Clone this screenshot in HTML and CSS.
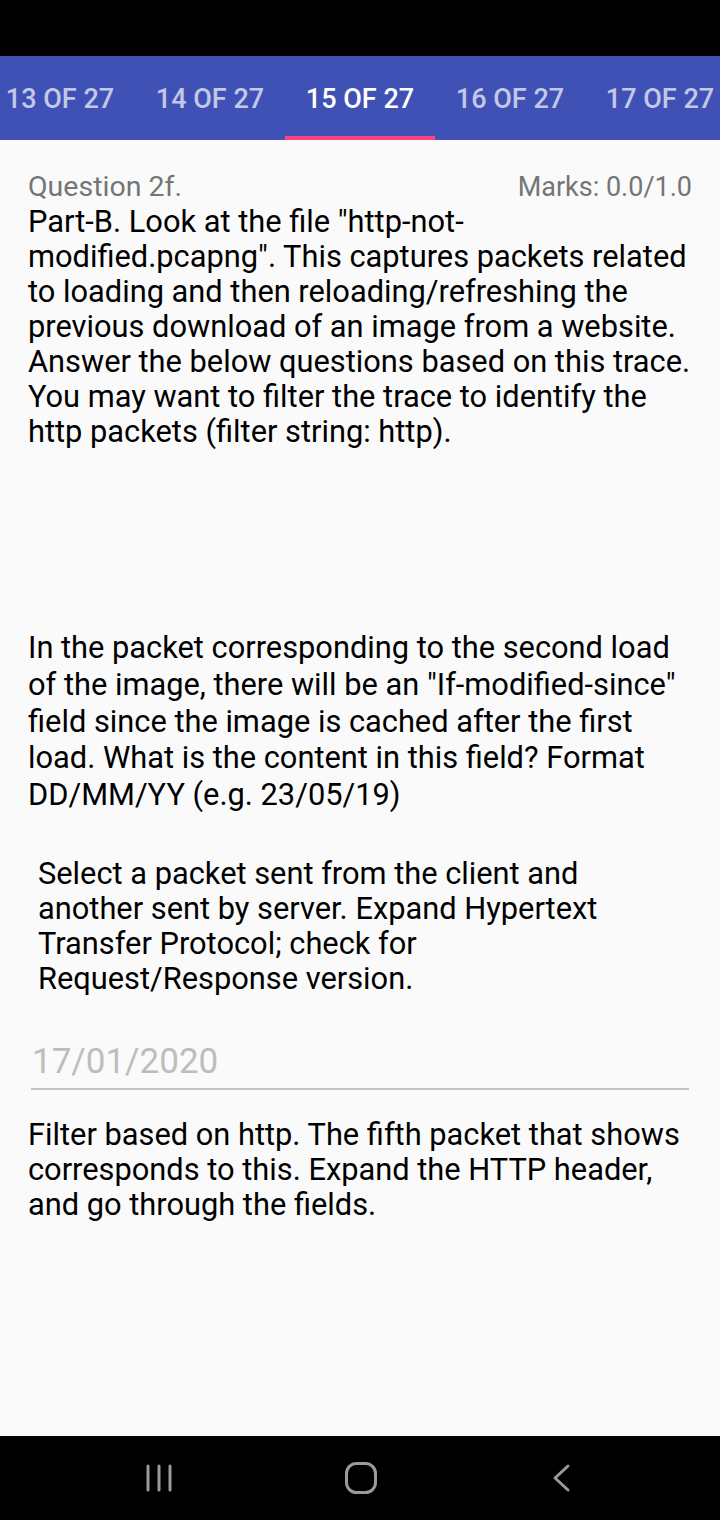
FILE: index.html
```html
<!DOCTYPE html>
<html>
<head>
<meta charset="utf-8">
<link rel="stylesheet" href="styles.css">
</head>
<body>
<div class="screen">
  <div class="status-bar"></div>
  <div class="tab-bar">
    <div class="tabs">
      <div class="tab">13 OF 27</div>
      <div class="tab">14 OF 27</div>
      <div class="tab active">15 OF 27</div>
      <div class="tab">16 OF 27</div>
      <div class="tab">17 OF 27</div>
    </div>
  </div>
  <main class="content">
    <div class="q-head">
      <span class="q-num">Question 2f.</span>
      <span class="q-marks">Marks: 0.0/1.0</span>
    </div>
    <p class="q-text">Part-B. Look at the file "http-not-modified.pcapng". This captures packets related to loading and then reloading/refreshing the previous download of an image from a website. Answer the below questions based on this trace. You may want to filter the trace to identify the http packets (filter string: http).</p>
    <p class="q-sub">In the packet corresponding to the second load of the image, there will be an "If-modified-since" field since the image is cached after the first load. What is the content in this field? Format DD/MM/YY (e.g. 23/05/19)</p>
    <p class="q-hint">Select a packet sent from the client and another sent by server. Expand Hypertext Transfer Protocol; check for Request/Response version.</p>
    <div class="answer">
      <div class="answer-text">17/01/2020</div>
    </div>
    <p class="feedback">Filter based on http. The fifth packet that shows corresponds to this. Expand the HTTP header, and go through the fields.</p>
  </main>
  <nav class="nav-bar">
    <div class="nav-cell">
      <svg width="30" height="30" viewBox="0 0 30 30"><g stroke="#9a9a9a" stroke-width="3" stroke-linecap="round"><line x1="3" y1="3" x2="3" y2="27"/><line x1="14" y1="3" x2="14" y2="27"/><line x1="25" y1="3" x2="25" y2="27"/></g></svg>
    </div>
    <div class="nav-cell">
      <svg width="32" height="32" viewBox="0 0 32 32"><rect x="1.5" y="1.5" width="29" height="29" rx="10" fill="none" stroke="#9a9a9a" stroke-width="3"/></svg>
    </div>
    <div class="nav-cell">
      <svg width="20" height="30" viewBox="0 0 20 30"><polyline points="16,3 3,15 16,27" fill="none" stroke="#9a9a9a" stroke-width="3" stroke-linecap="round" stroke-linejoin="round"/></svg>
    </div>
  </nav>
</div>
</body>
</html>
```

FILE: styles.css
```css
* { box-sizing: border-box; }
html, body { margin: 0; padding: 0; }
body {
  width: 720px;
  height: 1520px;
  overflow: hidden;
  background: #fafafa;
  font-family: Roboto, "Liberation Sans", sans-serif;
}
.screen {
  display: flex;
  flex-direction: column;
  height: 1520px;
}
.status-bar {
  height: 56px;
  background: #000;
  flex: none;
}
.tab-bar {
  height: 84px;
  background: #3f51b5;
  overflow: hidden;
  flex: none;
}
.tabs {
  display: flex;
  margin-left: -15px;
  height: 100%;
}
.tab {
  flex: none;
  width: 150px;
  height: 84px;
  display: flex;
  align-items: center;
  justify-content: center;
  font-weight: 500;
  font-size: 27px;
  color: rgba(255,255,255,0.7);
  border-bottom: 4px solid transparent;
  padding-top: 6px;
}
.tab.active {
  color: #fff;
  border-bottom-color: #ff4081;
}
.content {
  flex: 1;
  padding: 30px 28px 0 28px;
  color: #000;
}
.q-head {
  display: flex;
  justify-content: space-between;
  align-items: baseline;
  color: #757575;
  font-size: 28.5px;
  line-height: 33px;
}
.q-marks { font-size: 27px; }
.q-text {
  margin: 0;
  font-size: 30.8px;
  line-height: 35px;
}
.q-sub {
  margin: 181px 0 0 0;
  font-size: 30.8px;
  line-height: 36.75px;
}
.q-hint {
  margin: 42px 20px 0 10px;
  font-size: 30.8px;
  line-height: 35px;
}
.answer {
  margin: 46px 3px 0 3px;
  border-bottom: 2px solid #c4c4c4;
  padding-bottom: 6px;
}
.answer-text {
  font-size: 35px;
  line-height: 40px;
  color: #bdbdbd;
  padding-left: 1px;
}
.feedback {
  margin: 27px 0 0 0;
  font-size: 30.8px;
  line-height: 35px;
}
.nav-bar {
  height: 84px;
  background: #000;
  flex: none;
  display: flex;
  align-items: center;
  padding: 0 58px 0 60px;
}
.nav-cell {
  flex: 1;
  display: flex;
  justify-content: center;
  align-items: center;
}
.nav-cell svg { display: block; }
```
